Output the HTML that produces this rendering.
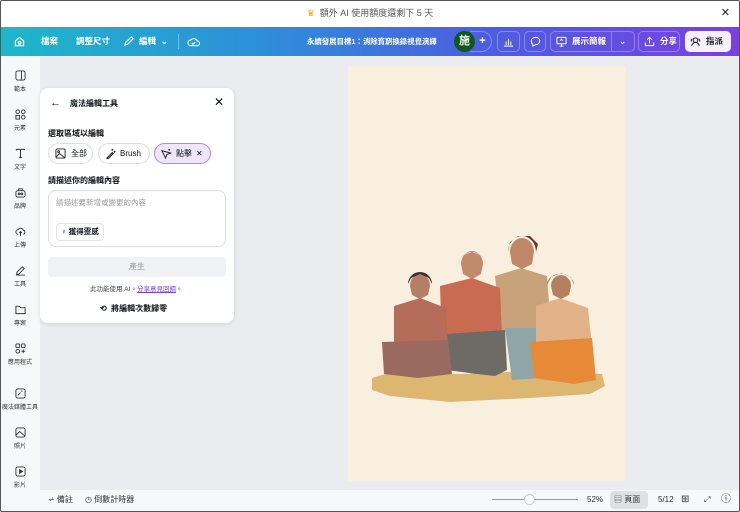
<!DOCTYPE html>
<html><head><meta charset="utf-8"><style>
*{box-sizing:border-box;margin:0;padding:0}
body{width:740px;height:512px;overflow:hidden;font-family:"Liberation Sans","Noto Sans CJK TC",sans-serif;background:#ebecf0;position:relative;color:#0e1318}
.frame{position:absolute;inset:0;border:1px solid #555;border-radius:2px;pointer-events:none;z-index:50}
.top{position:absolute;left:0;top:0;width:740px;height:27px;background:#fff;font-size:9px;color:#555;text-align:center;line-height:27px}
.bar{position:absolute;left:0;top:27px;width:740px;height:29px;background:linear-gradient(90deg,#1db8c9 0%,#2e8fd8 35%,#4b5fe0 65%,#7b3fe4 100%);color:#fff;font-size:8.5px;font-weight:bold}
.bar span{position:absolute;top:0;line-height:29px}
.btn{position:absolute;top:4px;height:21px;border:1px solid rgba(255,255,255,.3);border-radius:5px}
.side{position:absolute;left:0;top:56px;width:40px;height:456px;background:#f7f8fa}
.si{position:absolute;left:0;width:40px;text-align:center;font-size:6px;color:#333}
.si svg{display:block;margin:0 auto 3px}
.panel{position:absolute;left:40px;top:88px;width:194px;height:235px;background:#fff;border-radius:8px;box-shadow:0 1px 4px rgba(0,0,0,.12)}
.p{position:absolute;font-size:8px}
.pill{position:absolute;top:55px;height:21px;border:1px solid #dcdde0;border-radius:11px;font-size:8px;line-height:19px}
.canvas{position:absolute;left:348px;top:66px;width:278px;height:415px;background:#f8efdf}
.bot{position:absolute;left:40px;top:490px;width:700px;height:22px;background:#f7f8fa;font-size:8px;color:#333}
.bot span{position:absolute;top:0;line-height:20px}
</style></head><body>
<div class="top"><span style="color:#f0a800">♛</span>&nbsp; 額外 AI 使用額度還剩下 5 天<span style="position:absolute;right:10px;color:#222;font-size:11px">✕</span></div>
<div class="bar">
<svg style="position:absolute;left:14px;top:9px" width="11" height="11" viewBox="0 0 12 12" fill="none" stroke="#fff" stroke-width="1.3"><path d="M1.5 5.5L6 1.5l4.5 4v5h-9z"/><circle cx="6" cy="7.5" r="1.5"/></svg>
<span style="left:41px">檔案</span><span style="left:76px">調整尺寸</span>
<svg style="position:absolute;left:123px;top:9px" width="11" height="11" viewBox="0 0 12 12" fill="none" stroke="#fff" stroke-width="1.2"><path d="M2 10l1-3 6-6 2 2-6 6z"/></svg>
<span style="left:139px">編輯 &nbsp;⌄</span>
<span style="left:178px;top:7px;height:15px;border-left:1px solid rgba(255,255,255,.35)"></span>
<svg style="position:absolute;left:187px;top:9px" width="13" height="11" viewBox="0 0 14 11" fill="none" stroke="#fff" stroke-width="1.2"><path d="M4 10a3 3 0 010-6 4 4 0 017 1 2.5 2.5 0 010 5z"/><path d="M5 7l1.5 1.5L9 6"/></svg>
<span style="left:307px;font-size:7.4px">永續發展目標1：消除貧窮換錄視覺演繹</span>
<div style="position:absolute;left:454px;top:4px;width:21px;height:21px;border-radius:50%;background:#0d5a1c;color:#fff;font-size:11px;text-align:center;line-height:21px;z-index:2">施</div>
<div class="btn" style="left:470px;width:22px;border-radius:0 11px 11px 0;border-left:none;text-align:center;line-height:19px;font-size:11px;padding-left:4px">+</div>
<div class="btn" style="left:497px;width:23px"><svg style="margin:4px 5px" width="11" height="11" viewBox="0 0 12 12" fill="none" stroke="#fff" stroke-width="1.1"><path d="M1 11h10M3.5 10V6M6 10V3M8.5 10V6"/></svg></div>
<div class="btn" style="left:524px;width:22px"><svg style="margin:4px 5px" width="11" height="11" viewBox="0 0 12 12" fill="none" stroke="#fff" stroke-width="1.1"><path d="M6 1.5c3 0 4.5 1.8 4.5 4S9 9.5 6 9.5L3 11V9A4 4 0 011.5 5.5C1.5 3.3 3 1.5 6 1.5z"/></svg></div>
<div class="btn" style="left:550px;width:85px"><svg style="position:absolute;left:5px;top:4px" width="11" height="11" viewBox="0 0 12 12" fill="none" stroke="#fff" stroke-width="1.1"><rect x="1" y="1.5" width="10" height="7" rx="1"/><path d="M6 8.5V11M4 11h4M4.5 5l1.5-1.5L7.5 5"/></svg><span style="left:21px;line-height:19px">展示簡報</span><span style="left:60px;top:0;height:19px;border-left:1px solid rgba(255,255,255,.3)"></span><span style="left:68px;line-height:19px">⌄</span></div>
<div class="btn" style="left:638px;width:42px"><svg style="position:absolute;left:5px;top:4px" width="11" height="11" viewBox="0 0 12 12" fill="none" stroke="#fff" stroke-width="1.1"><path d="M6 8V1.5M3.5 4L6 1.5 8.5 4M1.5 7v3.5h9V7"/></svg><span style="left:21px;line-height:19px">分享</span></div>
<div style="position:absolute;left:685px;top:4px;width:46px;height:21px;background:#f6f0ff;border-radius:5px;color:#222"><svg style="position:absolute;left:5px;top:5px" width="11" height="11" viewBox="0 0 12 12" fill="none" stroke="#222" stroke-width="1.1"><circle cx="6" cy="4.5" r="2.5"/><path d="M2 11a4 4 0 018 0M1.5 6a3 3 0 011-3M10.5 6a3 3 0 00-1-3"/></svg><span style="left:21px;line-height:21px">指派</span></div>
</div>
<div class="side">
<div class="si" style="top:14px"><svg width="11" height="11" viewBox="0 0 12 12" fill="none" stroke="#333" stroke-width="1"><rect x="1" y="1" width="10" height="10" rx="2"/><path d="M7 1v10"/></svg>範本</div>
<div class="si" style="top:53px"><svg width="11" height="11" viewBox="0 0 12 12" fill="none" stroke="#333" stroke-width="1"><circle cx="3" cy="3" r="2"/><circle cx="9" cy="3" r="2"/><rect x="1" y="7" width="4" height="4"/><circle cx="9" cy="9" r="2"/></svg>元素</div>
<div class="si" style="top:92px"><svg width="11" height="11" viewBox="0 0 12 12" fill="none" stroke="#333" stroke-width="1.1"><path d="M1.5 2.5v-1h9v1M6 1.5v9M4.5 10.5h3"/></svg>文字</div>
<div class="si" style="top:131px"><svg width="11" height="11" viewBox="0 0 12 12" fill="none" stroke="#333" stroke-width="1"><rect x="1" y="4" width="10" height="7" rx="2"/><circle cx="4.5" cy="7.5" r="1"/><circle cx="7.5" cy="7.5" r="1"/><path d="M4 4V2h4v2"/></svg>品牌</div>
<div class="si" style="top:170px"><svg width="11" height="11" viewBox="0 0 12 12" fill="none" stroke="#333" stroke-width="1"><path d="M3.5 9a2.5 2.5 0 010-5 3 3 0 015.5.5A2.3 2.3 0 019 9M6 11V6M4.5 7.5L6 6l1.5 1.5"/></svg>上傳</div>
<div class="si" style="top:209px"><svg width="11" height="11" viewBox="0 0 12 12" fill="none" stroke="#333" stroke-width="1"><path d="M2 8l6-6 2 2-6 6H2zM1 11h10"/></svg>工具</div>
<div class="si" style="top:248px"><svg width="11" height="11" viewBox="0 0 12 12" fill="none" stroke="#333" stroke-width="1"><path d="M1 2.5h4l1 1.5h5v6.5H1z"/></svg>專案</div>
<div class="si" style="top:287px"><svg width="11" height="11" viewBox="0 0 12 12" fill="none" stroke="#333" stroke-width="1"><rect x="1" y="1" width="4" height="4" rx="1"/><rect x="7" y="1" width="4" height="4" rx="1"/><circle cx="3" cy="9" r="2"/><path d="M9 7v4M7 9h4"/></svg>應用程式</div>
<div class="si" style="top:332px"><svg width="11" height="11" viewBox="0 0 12 12" fill="none" stroke="#333" stroke-width="1"><rect x="1" y="1" width="10" height="10" rx="2"/><path d="M3 8l3-3M7 3l1 1"/></svg>魔法媒體工具</div>
<div class="si" style="top:371px"><svg width="11" height="11" viewBox="0 0 12 12" fill="none" stroke="#333" stroke-width="1"><rect x="1" y="1" width="10" height="10" rx="2"/><path d="M1 9l4-4 6 5"/></svg>照片</div>
<div class="si" style="top:410px"><svg width="11" height="11" viewBox="0 0 12 12" fill="none" stroke="#333" stroke-width="1"><rect x="1" y="1" width="10" height="10" rx="2"/><path d="M5 4v4l3-2z" fill="#333"/></svg>影片</div>
</div>
<div class="panel">
<span class="p" style="left:10px;top:9px;font-size:11px">←</span>
<span class="p" style="left:30px;top:10px;font-weight:bold">魔法編輯工具</span>
<span class="p" style="left:174px;top:7px;font-size:12px">✕</span>
<span class="p" style="left:8px;top:40px;font-weight:bold">選取區域以編輯</span>
<div class="pill" style="left:8px;width:45px"><svg style="position:absolute;left:6px;top:4px" width="11" height="11" viewBox="0 0 12 12" fill="none" stroke="#222" stroke-width="1"><rect x="1" y="1" width="10" height="10" rx="1.5"/><circle cx="4" cy="4" r="1"/><path d="M1 10l4-4 6 5"/></svg><span style="position:absolute;left:22px">全部</span></div>
<div class="pill" style="left:58px;width:52px"><svg style="position:absolute;left:6px;top:4px" width="11" height="11" viewBox="0 0 12 12" fill="none" stroke="#222" stroke-width="1.1"><path d="M2 11l6-6 1 1-6 6zM8 1v2M7 2h2M10.5 3v2M9.5 4h2"/></svg><span style="position:absolute;left:21px">Brush</span></div>
<div class="pill" style="left:114px;width:57px;background:#efe6fc;border-color:#a98ae6"><svg style="position:absolute;left:6px;top:4px" width="11" height="11" viewBox="0 0 12 12" fill="none" stroke="#222" stroke-width="1"><path d="M1 3l4 8 1.5-4 4-1.5zM9 1v2M8 2h2"/></svg><span style="position:absolute;left:21px">點擊</span><span style="position:absolute;left:41px">✕</span></div>
<span class="p" style="left:8px;top:87px;font-weight:bold">請描述你的編輯內容</span>
<div style="position:absolute;left:8px;top:102px;width:178px;height:57px;border:1px solid #dcdde0;border-radius:8px"><span class="p" style="left:7px;top:6px;color:#999;font-size:7.5px">請描述要新增或變更的內容</span>
<div style="position:absolute;left:7px;top:32px;width:48px;height:18px;border:1px solid #e4e4e6;border-radius:4px;font-size:7.5px;line-height:16px;padding-left:4px;font-weight:bold">♀ 獲得靈感</div></div>
<div style="position:absolute;left:8px;top:169px;width:178px;height:20px;background:#f1f2f3;border-radius:4px;text-align:center;line-height:20px;font-size:8px;color:#999">產生</div>
<span class="p" style="left:50px;top:195px;font-size:6.5px;color:#444">此功能使用 AI。<u style="color:#7a3fe0">分享意見回饋</u>。</span>
<span class="p" style="left:60px;top:215px;font-weight:bold">⟲ &nbsp;將編輯次數歸零</span>
</div>
<div class="canvas">
<svg width="278" height="415" viewBox="0 0 278 415">
<path d="M24 312l20-6 70 2 90-4 50 4 3 12-15 8-60 4-80 4-60-6-18-6z" fill="#ddb772"/>
<!-- F3 -->
<path d="M147 210l26-8 26 8 4 55-20 5-30-5z" fill="#c8a27a"/>
<path d="M157 262l35 0 2 50-30 2z" fill="#8ea6a8"/>
<path d="M162 186a12 14 0 0124 0l-2 12-10 5-10-5z" fill="#c08868"/>
<path d="M160 186a14 16 0 0128 0l2-8-8-8-12 0-8 6z" fill="#6a3a28"/>
<!-- F2 -->
<path d="M92 220l32-8 28 10 2 50-10 6-50 0z" fill="#c86b52"/>
<path d="M97 268l60-4 2 40-12 6-18-2-30-4z" fill="#6e6a66"/>
<path d="M113 198a11 13 0 0122 0l-2 10-9 5-9-5z" fill="#c28a6c"/>
<path d="M110 200a14 14 0 0128 0l-3-10-11-4-11 4z" fill="#d8d8d8"/>
<!-- F1 -->
<path d="M46 240l26-8 26 10 2 40-20 20-34-2z" fill="#b56c58"/>
<path d="M34 276l66-2 4 34-34 4-34-4z" fill="#9a6a60"/>
<path d="M62 220a10 12 0 0120 0l-2 9-8 4-8-4z" fill="#b47f64"/>
<path d="M60 218a12 12 0 0124 0l-3-6-9-4-9 4z" fill="#3e302a"/>
<!-- F4 -->
<path d="M188 240l24-8 28 10 4 38-56 2z" fill="#e2b288"/>
<path d="M182 276l62-4 4 42-22 4-40-6z" fill="#e68a38"/>
<path d="M203 220a10 11 0 0120 0l-2 9-8 4-8-4z" fill="#b58062"/>
<path d="M199 219a13 11 0 0127 0l-3-8-10-4-10 4z" fill="#6a8a50"/>
</svg>
</div>
<div class="bot">
<span style="left:8px">⩫ 備註</span><span style="left:45px">◷ 倒數計時器</span>
<div style="position:absolute;left:452px;top:9px;width:86px;height:1px;background:#999"></div>
<div style="position:absolute;left:484px;top:4px;width:11px;height:11px;border-radius:50%;background:#fff;border:1px solid #ccc"></div>
<span style="left:547px">52%</span>
<div style="position:absolute;left:570px;top:1px;width:38px;height:18px;background:#dfe0e3;border-radius:4px;line-height:18px;padding-left:4px">▤ 頁面</div>
<span style="left:618px">5/12</span><span style="left:641px;font-size:10px">⊞</span><span style="left:664px">⤢</span><span style="left:681px;font-size:10px">ⓘ</span>
</div>
<div class="frame"></div>
</body></html>
